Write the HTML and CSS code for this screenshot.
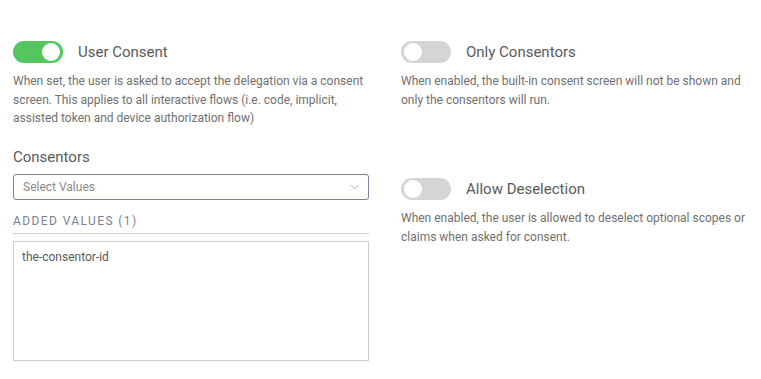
FILE: index.html
```html
<!DOCTYPE html>
<html>
<head>
<meta charset="utf-8">
<link rel="stylesheet" href="styles.css">
</head>
<body>
<div class="page">
  <div class="col">
    <div class="setting">
      <div class="toggle-row">
        <span class="toggle on"><span class="knob"></span></span>
        <span class="title">User Consent</span>
      </div>
      <p class="desc">When set, the user is asked to accept the delegation via a consent screen. This applies to all interactive flows (i.e. code, implicit, assisted token and device authorization flow)</p>
    </div>
    <div class="field">
      <div class="label">Consentors</div>
      <div class="select">
        <span class="placeholder">Select Values</span>
        <svg class="chev" width="9" height="6" viewBox="0 0 9 6"><path d="M0.5 0.8 L4.5 4.8 L8.5 0.8" fill="none" stroke="#b5b5b5" stroke-width="1"/></svg>
      </div>
      <div class="added">ADDED VALUES (1)</div>
      <div class="values">the-consentor-id</div>
    </div>
  </div>
  <div class="col">
    <div class="setting">
      <div class="toggle-row">
        <span class="toggle"><span class="knob"></span></span>
        <span class="title">Only Consentors</span>
      </div>
      <p class="desc">When enabled, the built-in consent screen will not be shown and only the consentors will run.</p>
    </div>
    <div class="setting second">
      <div class="toggle-row">
        <span class="toggle"><span class="knob"></span></span>
        <span class="title">Allow Deselection</span>
      </div>
      <p class="desc">When enabled, the user is allowed to deselect optional scopes or claims when asked for consent.</p>
    </div>
  </div>
</div>
</body>
</html>
```
FILE: styles.css
```css
* { box-sizing: border-box; }
html, body { margin: 0; padding: 0; background: #fff; }
body { font-family: Roboto, "Noto Sans", sans-serif; color: #555; }
.page {
  display: grid;
  grid-template-columns: 356px 356px;
  column-gap: 32px;
  padding: 41px 0 0 13px;
}
.col { display: flex; flex-direction: column; }
.toggle-row { display: flex; align-items: center; height: 22px; }
.toggle {
  width: 50px; height: 22px; border-radius: 11px;
  background-color: #d6d6d6;
  background-image: radial-gradient(#c9c9c9 0.6px, transparent 0.8px);
  background-size: 4px 4px;
  position: relative; flex: none;
}
.toggle .knob {
  position: absolute; top: 2px; left: 3px;
  width: 18px; height: 18px; border-radius: 50%; background: #fff;
}
.toggle.on { background: #55c560; }
.toggle.on .knob { left: auto; right: 3px; }
.title { margin-left: 15px; font-size: 15px; color: #5a5a5a; }
.desc {
  margin: 9px 0 0 0; font-size: 12px; line-height: 18.5px; color: #707070;
}
.second { margin-top: 69px; }
.field { margin-top: 20px; }
.label { font-size: 15px; color: #5a5a5a; line-height: 18px; }
.select {
  margin-top: 8px; height: 26px; border: 1px solid #7d8199; border-radius: 3px;
  display: flex; align-items: center; justify-content: space-between;
  padding: 0 9px 0 9px;
}
.placeholder { font-size: 12px; color: #8a8a8a; }
.chev { margin-top: 1px; }
.added {
  margin-top: 14px; font-size: 12px; letter-spacing: 1.4px; color: #7b8098;
  padding-bottom: 5px; border-bottom: 1px solid #cfcfcf; line-height: 14px;
}
.values {
  margin-top: 7px; height: 120px; border: 1px solid #cdcdcd;
  padding: 7px 8px; font-size: 12px; color: #5a5a5a; line-height: 16px;
}
```
